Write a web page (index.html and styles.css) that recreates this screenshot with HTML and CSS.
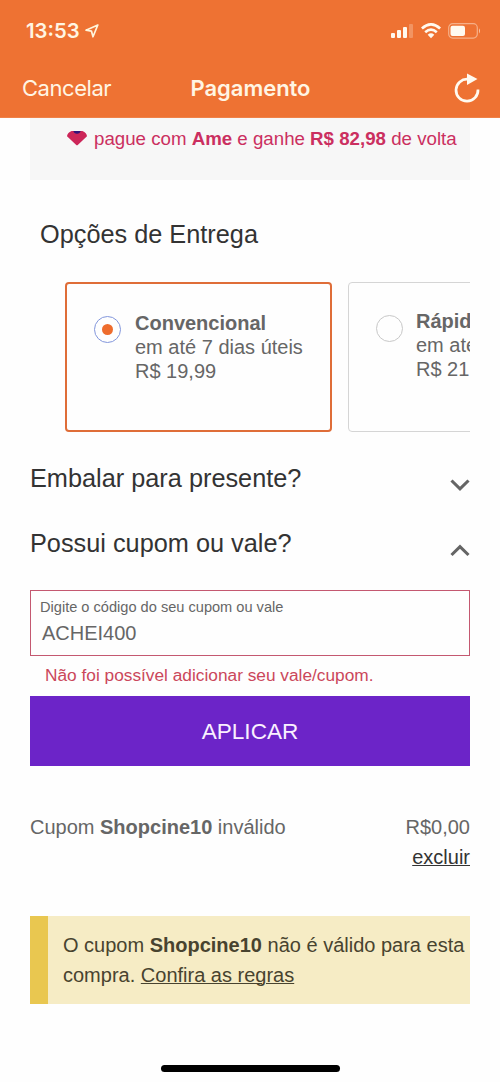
FILE: index.html
```html
<!DOCTYPE html>
<html lang="pt-BR">
<head>
<meta charset="utf-8">
<title>Pagamento</title>
<link rel="stylesheet" href="styles.css">
</head>
<body>
<div class="screen">
  <header class="header">
    <div class="status">
      <div class="clock"><span>13:53</span>
        <svg class="location" width="14" height="14" viewBox="0 0 14 14"><path d="M12.8 1 1 6.2 6.5 7.2 8 12.8Z" fill="none" stroke="#fff5dc" stroke-width="1.7" stroke-linejoin="round"/></svg>
      </div>
      <div class="indicators">
        <svg width="23" height="16" viewBox="0 0 23 16" fill="#fffaf0"><rect x="0" y="10" width="4" height="5" rx="1"/><rect x="6" y="7" width="4" height="8" rx="1"/><rect x="12" y="4" width="4" height="11" rx="1"/><rect x="18" y="1" width="4" height="14" rx="1" opacity=".25"/></svg>
        <svg width="20" height="16" viewBox="0 0 20 16" fill="none" stroke="#fffaf0" stroke-width="2.7"><path d="M.9 5.4Q10-2.6 19.1 5.4"/><path d="M4.2 9.2Q10 4.2 15.8 9.2"/><path d="M6.7 11.7Q10 9 13.3 11.7L10 15.2Z" fill="#fffaf0" stroke="none"/></svg>
        <svg width="33" height="16" viewBox="0 0 33 16"><rect x=".7" y=".7" width="28.6" height="14.4" rx="4" fill="none" stroke="#fffaf0" stroke-opacity=".45" stroke-width="1.2"/><rect x="2.5" y="2.7" width="14.5" height="10.4" rx="2" fill="#fffaf0"/><path d="M31 5.3q2 2.6 0 5.2Z" fill="#fffaf0" opacity=".6"/></svg>
      </div>
    </div>
    <nav class="nav">
      <span class="cancel">Cancelar</span>
      <span class="title">Pagamento</span>
      <svg class="reload" width="26" height="30" viewBox="0 0 26 30"><path d="M14 6.2A11 11 0 1 0 24 16.5" fill="none" stroke="#fffaf0" stroke-width="2.7"/><path d="M13 .5V12L23.5 6Z" fill="#fffaf0"/></svg>
    </nav>
  </header>
  <main class="content">
    <div class="cashback">
      <svg width="20" height="16" viewBox="0 0 20 16"><path d="M4.6 1H15.4Q19.8 3 20 6.2L11 14.8Q10 15.8 9 14.8L0 6.2Q.2 3 4.6 1Z" fill="#cc2659"/><path d="M6.4 1H13.6Q13 3.8 10 3.8T6.4 1Z" fill="#32127a"/></svg>
      <span class="cashback-text">pague com <b>Ame</b> e ganhe <b>R$ 82,98</b> de volta</span>
    </div>
    <h2 class="heading delivery-title">Opções de Entrega</h2>
    <div class="options">
      <div class="card card-selected">
        <span class="radio radio-on"></span>
        <div><b>Convencional</b><br>em até 7 dias úteis<br>R$ 19,99</div>
      </div>
      <div class="card">
        <span class="radio"></span>
        <div><b>Rápida</b><br>em até 5 dias úteis<br>R$ 21,99</div>
      </div>
    </div>
    <div class="accordion gift">
      <h2 class="heading">Embalar para presente?</h2>
      <svg class="chevron" width="20" height="13" viewBox="0 0 20 13"><path d="M1.5 1.5 10 9.8 18.5 1.5" fill="none" stroke="#656565" stroke-width="3.1"/></svg>
    </div>
    <div class="accordion coupon">
      <h2 class="heading">Possui cupom ou vale?</h2>
      <svg class="chevron" width="20" height="13" viewBox="0 0 20 13"><path d="M1.5 11 10 2.7 18.5 11" fill="none" stroke="#656565" stroke-width="3.1"/></svg>
    </div>
    <div class="field">
      <div class="field-label">Digite o código do seu cupom ou vale</div>
      <div class="field-value">ACHEI400</div>
    </div>
    <p class="error">Não foi possível adicionar seu vale/cupom.</p>
    <button class="apply">APLICAR</button>
    <div class="result">
      <div>Cupom <b>Shopcine10</b> inválido</div>
      <div class="amount">R$0,00<br><a class="link">excluir</a></div>
    </div>
    <div class="alert">O cupom <b>Shopcine10</b> não é válido para esta<br>compra. <a class="link">Confira as regras</a></div>
  </main>
  <div class="home"></div>
</div>
</body>
</html>
```
FILE: styles.css
```css
* { box-sizing: border-box; }
body { margin: 0; background: #fefefe; font-family: "Liberation Sans", Arial, sans-serif; color: #666; }
.screen { width: 500px; height: 1082px; display: flex; flex-direction: column; overflow: hidden; }
.header { height: 118px; flex: none; background: #ee7233; color: #fff5e3; font-family: Inter, sans-serif; border-bottom: 1px solid #ef8148; }
.status { height: 62px; padding: 0 19px 0 26px; display: flex; align-items: center; justify-content: space-between; }
.clock { display: flex; align-items: center; gap: 5px; font-size: 20.3px; font-weight: 600; line-height: 24px; }
.indicators { display: flex; align-items: center; gap: 7px; }
.nav { height: 51px; padding: 0 20px 0 22px; display: grid; grid-template-columns: 1fr auto 1fr; align-items: center; line-height: 28px; }
.cancel { font-size: 22px; letter-spacing: -0.45px; }
.title { font-size: 22px; font-weight: 600; letter-spacing: -0.05px; margin-left: -1px; }
.reload { justify-self: end; }
.content { padding: 0 30px; flex: 1; }
.cashback { height: 62px; background: #f7f7f7; display: flex; align-items: flex-start; padding: 8px 0 0 37px; gap: 7px; color: #cb2f60; font-size: 18.7px; line-height: 25px; white-space: nowrap; }
.cashback svg { margin-top: 4px; flex: none; }
.heading { margin: 0; color: #333; font-weight: 400; font-size: 25.3px; line-height: 30px; }
.delivery-title { margin: 39px 0 0 10px; }
.options { margin: 33px 0 0 35px; display: flex; gap: 16px; overflow: hidden; }
.card { flex: none; width: 267px; height: 150px; border: 1px solid #d5d5d5; border-radius: 4px; padding: 26px 0 0 27px; display: flex; gap: 13px; font-size: 20px; line-height: 24px; white-space: nowrap; }
.card-selected { border: 2.5px solid #df6d38; padding: 27px 0 0 27px; }
.radio { flex: none; width: 27px; height: 27px; margin-top: 6px; border: 1px solid #c8c8c8; border-radius: 50%; display: grid; place-items: center; }
.card-selected .radio { margin-top: 5px; margin-right: 1px; }
.radio-on { border-color: #8296dc; }
.radio-on::after { content: ""; width: 11px; height: 11px; border-radius: 50%; background: #ee6c2c; }
.accordion { height: 30px; display: flex; justify-content: space-between; }
.gift { margin-top: 31px; }
.coupon { margin-top: 35px; }
.chevron { margin-top: 16px; }
.field { height: 66px; margin-top: 32px; border: 1px solid #c45870; padding: 7px 9px; }
.field-label { font-size: 14.6px; line-height: 18px; }
.field-value { font-size: 20px; line-height: 24px; margin-top: 5px; padding-left: 2px; }
.error { margin: 9px 0 0 15px; font-size: 17.3px; line-height: 20px; color: #cb475b; }
.apply { display: block; width: 100%; height: 70px; margin-top: 11px; padding: 1px 0 0; border: 0; background: #6c24c8; color: #faf0ff; font-family: inherit; font-size: 22.6px; }
.result { margin-top: 47px; display: flex; justify-content: space-between; font-size: 20px; line-height: 29px; }
.amount { text-align: right; }
.amount .link { color: #333; position: relative; top: 1px; }
.link { text-decoration: underline; text-decoration-thickness: 1px; }
.alert { height: 88px; margin-top: 45px; padding: 15px 0 0 15px; border-left: 18px solid #e9c750; background: #f6ecc5; color: #48432f; font-size: 20px; line-height: 29.5px; white-space: nowrap; }
.home { flex: none; width: 179px; height: 7px; margin: 0 auto 10px; border-radius: 4px; background: #000; }
```
